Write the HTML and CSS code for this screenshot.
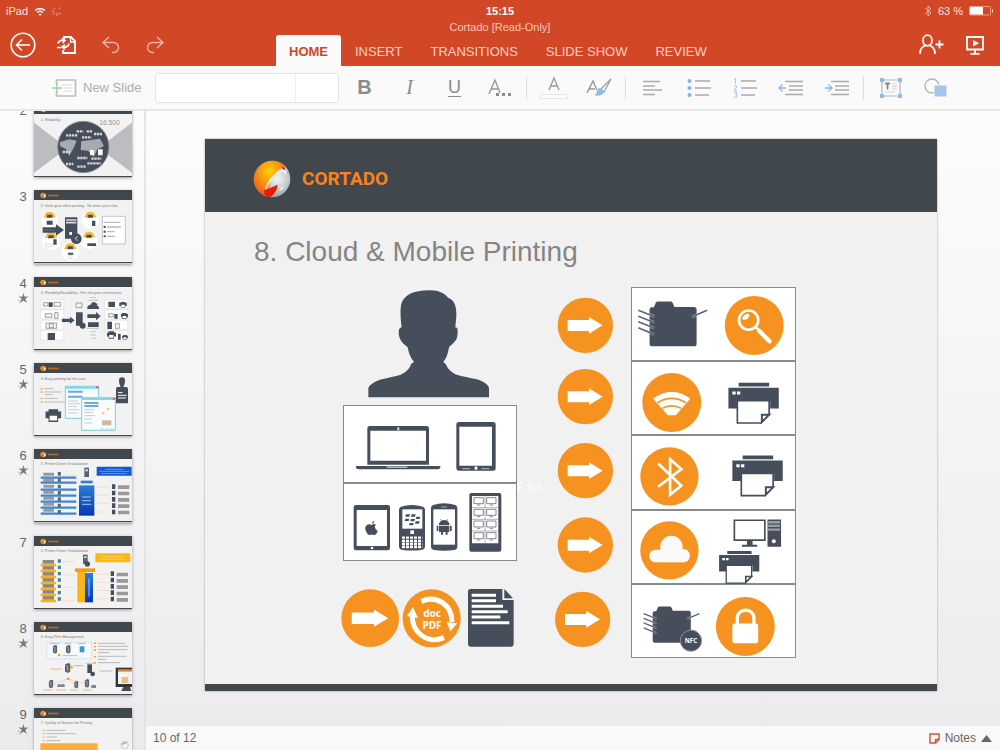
FILE: index.html
```html
<!DOCTYPE html>
<html lang="en">
<head>
<meta charset="utf-8">
<title>Cortado [Read-Only]</title>
<link rel="stylesheet" href="styles.css">
</head>
<body class="app">

<svg class="defs" aria-hidden="true">
  <defs>
    <radialGradient id="ballSilver" cx=".65" cy=".5" r=".6"><stop offset="0" stop-color="#f4f6f6"/><stop offset=".5" stop-color="#c3c9ca"/><stop offset="1" stop-color="#7b8588"/></radialGradient>
    <radialGradient id="ballOrange" cx=".5" cy=".3" r=".7"><stop offset="0" stop-color="#ffd400"/><stop offset=".45" stop-color="#fb9a12"/><stop offset="1" stop-color="#f4511e"/></radialGradient>
    <linearGradient id="blueBox" x2="0" y2="1"><stop offset="0" stop-color="#2a7fd8"/><stop offset="1" stop-color="#0836b4"/></linearGradient>
    <symbol id="arrow" viewBox="-84 -84 168 168" overflow="visible">
      <circle r="83" fill="#f69320"/>
      <path d="M-53-16H11V-25L52 0 11 25V17H-53z" fill="#fff"/>
    </symbol>
    <symbol id="printer" viewBox="0 0 152 124" overflow="visible">
      <path d="M31 0h92v11H31zM0 15h152v62h-26V54H28v23H0z" fill="#474e5b"/>
      <path d="M27 54h96v40l-25 27H27z" fill="#fff" stroke="#474e5b" stroke-width="5"/>
      <path d="M101 118V96h22z" fill="#fff" stroke="#474e5b" stroke-width="6"/>
      <path d="M12 26h10v9H12zM26 26h10v9H26z" fill="#fff"/>
    </symbol>
    <symbol id="folder" viewBox="0 0 210 138" overflow="visible">
      <path d="M34 24q0-7 7-7h6l6-14q2-3 6-3h38q5 0 7 4l5 12h59q8 0 8 8v104q0 7-8 7H42q-8 0-8-8z" fill="#474e5b"/>
      <path d="M0 26l48 19M0 44l48 19M0 61l48 19M0 79l48 20M208 26l-46 20" fill="none" stroke="#fff" stroke-width="9" opacity=".35"/>
      <path d="M0 26l48 19M0 44l48 19M0 61l48 19M0 79l48 20M208 26l-46 20" fill="none" stroke="#606774" stroke-width="5"/>
    </symbol>
    <symbol id="star" viewBox="0 0 12 12"><path d="M6 0l1.2 4.1 4.3-.2L7.900 6.400 9.600 11 6 8.200 2.400 11 4.100 6.400.5 3.900l4.300.2z" fill="#777"/><path d="M1 11l3-2M0 8h3" stroke="#999" stroke-width=".7"/></symbol>
    <symbol id="thumbHead" viewBox="0 0 294 220" overflow="visible">
      <path d="M0 0h294v220H0z" fill="#f2f2f2"/><path d="M0 0h294v30H0zM0 216h294v4H0z" fill="#40484d"/>
      <circle cx="27" cy="16" r="8" fill="#f78a1a"/><path d="M28 17l7-5a8 8 0 0 1-7 12z" fill="#e6e6e6"/><path d="M24 20l6-3-2 6z" fill="#e8271b"/>
      <path d="M42 14h32v5H42z" fill="#b8691f"/>
    </symbol>
    <symbol id="miniPrinter" viewBox="0 0 30 24"><path d="M6 0h18v4h6v13h-6v7H6v-7H0V4h6z" fill="#474e5b"/><path d="M8 12h14v9H8z" fill="#fff"/></symbol>
    <symbol id="miniServer" viewBox="0 0 14 26"><path d="M0 4l8-4 6 2v20l-7 4-7-4z" fill="#59636f"/><path d="M2 6l5 2v13" stroke="#b9c7d4" stroke-width="2" fill="none"/></symbol>
  </defs>
</svg>

<header class="top">
  <div class="status">
    <div class="status-left"><span>iPad</span>
      <svg width="12" height="9" viewBox="0 0 12 9" fill="none" stroke="#fff"><path d="M1 3.500q5-4 10 0M3 5.500q3-2.400 6 0" stroke-width="1.400"/><path d="M4.500 6.800h3L6 9z" fill="#fff" stroke="none"/></svg>
      <svg width="10" height="10" viewBox="0 0 10 10" stroke="#fff" opacity=".6"><path d="M5 7v3M2.900 6.500L1 8.500M2 5H0M3 3L1.500 1.500M7.100 6.500L8.500 8.500M7 3l1.500-1.500" stroke-width=".9"/></svg>
    </div>
    <time class="clock">15:15</time>
    <div class="status-right">
      <svg width="8" height="12" viewBox="0 0 8 12" fill="none" stroke="#f0b5a6"><path d="M1 3l6 5-3 3V1l3 3-6 5"/></svg>
      <span>63 %</span>
      <svg width="25" height="10" viewBox="0 0 25 10"><rect x=".5" y=".5" width="21" height="8.500" rx="1" fill="none" stroke="#ee9d88"/><path d="M1 1h13v7.500H1zM23 3q2 2 0 4z" fill="#fff"/></svg>
    </div>
  </div>

  <div class="tools">
    <button class="tool" aria-label="Back"><svg width="26" height="26" viewBox="0 0 26 26" fill="none" stroke="#fff" stroke-width="1.600"><circle cx="13" cy="13" r="11.800"/><path d="M20 13H7M12 7.500L6.500 13l5.500 5.500"/></svg></button>
    <button class="tool" aria-label="File"><svg width="22" height="20" viewBox="0 0 22 20" fill="none" stroke="#fff" stroke-width="1.800"><path d="M8 4V2h7l4 4v12H7v-3"/><path d="M14.500 2v5H19" stroke-width="1.300"/><path d="M2 8.500Q3 4.500 8 5.500M6 3l3 2.500L6.500 8M13 8.500q-1 4.500-6 3.500M9 9.500L6 12l3 2.500M1 12.500h4" stroke-width="1.600"/></svg></button>
    <button class="tool tool-dim" aria-label="Undo"><svg width="20" height="18" viewBox="0 0 20 18" fill="none" stroke="#fff" stroke-width="1.400"><path d="M8 1L2 6.500 8 12M2 6.500h10.500a5 5 0 0 1 0 10H11"/></svg></button>
    <button class="tool tool-dim" aria-label="Redo"><svg width="20" height="18" viewBox="0 0 20 18" fill="none" stroke="#fff" stroke-width="1.400"><path d="M12 1l6 5.500-6 5.500M18 6.500H7.500a5 5 0 0 0 0 10H9"/></svg></button>
  </div>

  <div class="middle">
    <div class="doc-title">Cortado [Read-Only]</div>
    <nav class="tabs">
      <button class="tab tab-on">HOME</button><button class="tab">INSERT</button><button class="tab">TRANSITIONS</button><button class="tab">SLIDE SHOW</button><button class="tab">REVIEW</button>
    </nav>
  </div>

  <div class="tools tools-right">
    <button class="tool" aria-label="Share"><svg width="26" height="22" viewBox="0 0 26 22" fill="none" stroke="#fff" stroke-width="1.800"><ellipse cx="9.500" cy="6.500" rx="4.500" ry="5.300"/><path d="M2 20q0-7 5.500-8.500M17 20q0-7-5.500-8.500M17.500 10.500h8M21.500 6.500v8"/></svg></button>
    <button class="tool" aria-label="Play slide show"><svg width="20" height="20" viewBox="0 0 20 20" fill="none" stroke="#fff" stroke-width="1.800"><path d="M2 2v12.500h16V2M1 2h18M10 14v4M5.500 18.800h9"/><path d="M8 5l6 3.300L8 11.500z" fill="#fff" stroke="none"/></svg></button>
  </div>
</header>

<div class="ribbon">
  <button class="new-slide"><svg width="25" height="18" viewBox="0 0 25 18" fill="none"><path d="M4.500 6V1h19v16h-19v-5" stroke="#bdbdbd" stroke-width="1.600"/><path d="M10 6h9M12 9h8M12 12h8" stroke="#dedede"/><path d="M0 9h10M5 4v10" stroke="#a3d3a8" stroke-width="1.400"/></svg>New Slide</button>
  <div class="font-box"><input class="font-name" type="text" aria-label="Font"><input class="font-size" type="text" aria-label="Font size"></div>
  <div class="group">
    <button class="rb bold" aria-label="Bold">B</button>
    <button class="rb italic" aria-label="Italic">I</button>
    <button class="rb under" aria-label="Underline">U</button>
    <button class="rb" aria-label="More formatting"><svg width="24" height="20" viewBox="0 0 24 20" fill="none" stroke="#999" stroke-width="1.400"><path d="M1 16L7 2l5 13M3 11h7"/><path d="M8 15h3v3H8zM14 15h3v3h-3zM20 15h3v3h-3z" fill="#8c8c8c" stroke="none"/></svg></button>
  </div>
  <span class="sep"></span>
  <div class="group">
    <button class="rb" aria-label="Font color"><svg width="28" height="24" viewBox="0 0 28 24" fill="none"><path d="M9 14l5-12 5 12M11 10h6" stroke="#999" stroke-width="1.300"/><path d="M.5 18.500h27v4H.5z" fill="#fff" stroke="#e6e6e6"/></svg></button>
    <button class="rb" aria-label="Text effects"><svg width="26" height="20" viewBox="0 0 26 20" fill="none"><path d="M1 15L7 3l4 9M3 11h6" stroke="#999" stroke-width="1.400"/><path d="M14 12L25 1l-7 13z" fill="#fff" stroke="#999" stroke-width="1.200"/><path d="M13 10q5 1 5 5-4 4-10 2 3-1 3-4z" fill="#8fb9e6"/></svg></button>
  </div>
  <span class="sep"></span>
  <div class="group group-wide">
    <button class="rb" aria-label="Align"><svg width="19" height="16" viewBox="0 0 19 16" stroke="#aaa" stroke-width="1.400"><path d="M0 1.500h17M0 6h12M0 10h19M0 14.500h12"/></svg></button>
    <button class="rb" aria-label="Bullets"><svg width="24" height="20" viewBox="0 0 24 20" stroke="#aaa" stroke-width="1.400"><path d="M8 3h15M8 10h16M8 17h14"/><g fill="#86b3e4" stroke="none"><circle cx="2.500" cy="3" r="2"/><circle cx="2.500" cy="10" r="2"/><circle cx="2.500" cy="17" r="2"/></g></svg></button>
    <button class="rb" aria-label="Numbering"><svg width="24" height="20" viewBox="0 0 24 20" stroke="#aaa" stroke-width="1.400"><path d="M8 3h15M8 10h16M8 17h14"/><path d="M1 1.500L2.500.5V6M1 8h2.500v1.500L1 12h3M1 14h3l-1.500 2H4l-.5 3H1" fill="none" stroke="#a4c6ec" stroke-width="1"/></svg></button>
    <button class="rb" aria-label="Decrease indent"><svg width="26" height="16" viewBox="0 0 26 16" fill="none" stroke="#aaa" stroke-width="1.600"><path d="M7 1.500h18M11 6h14M11 10h14M7 14.500h18"/><path d="M8 8H1M4.500 4.500L1 8l3.500 3.500" stroke="#8fb9e6" stroke-width="1.300"/></svg></button>
    <button class="rb" aria-label="Increase indent"><svg width="26" height="16" viewBox="0 0 26 16" fill="none" stroke="#aaa" stroke-width="1.600"><path d="M7 1.500h18M11 6h14M11 10h14M7 14.500h18"/><path d="M1 8h7M4.500 4.500L8 8l-3.500 3.500" stroke="#8fb9e6" stroke-width="1.300"/></svg></button>
  </div>
  <span class="sep"></span>
  <div class="group">
    <button class="rb" aria-label="Text box"><svg width="22" height="20" viewBox="0 0 22 20" fill="none"><path d="M2 2h18v16H2z" stroke="#b5b5b5" stroke-width="1.200"/><path d="M5 5.500h5M7.500 5.500v6" stroke="#888" stroke-width="1.800"/><path d="M12 6h5M12 8.500h5M12 11h5M5 14h10" stroke="#cfcfcf"/><path d="M0 0h4v4H0zM18 0h4v4h-4zM0 16h4v4H0zM18 16h4v4h-4z" fill="#8fb9e6"/></svg></button>
    <button class="rb" aria-label="Shapes"><svg width="24" height="20" viewBox="0 0 24 20" fill="none"><circle cx="8" cy="8" r="7" stroke="#b5b5b5" stroke-width="1.400"/><path d="M10 7h13v12H10z" fill="#a5c5e8" stroke="#fafafa"/></svg></button>
  </div>
</div>

<div class="work">
  <aside class="side" aria-label="Slides">
    <ol class="thumbs">
      <li class="thumb-row"><div class="num">2</div>
        <svg class="thumb" viewBox="104 10 294 220"><use href="#thumbHead" x="104" y="10" width="294" height="220"/>
          <text x="124" y="60" class="t-title">1. Reliability</text><text x="300" y="74" class="t-big">16.500</text>
          <path d="M104 66l100 76-100 74zM398 66l-100 76 100 74z" fill="#bcbdc1"/><circle cx="252" cy="139" r="77" fill="#474e5b" stroke="#8d9199" stroke-width="3"/>
          <path d="M182 124l28-8 22 4-8 20-14 26-10-20-18-10zM246 122l56-8 12 22-20 10-10 22-18-18-22-2z" fill="#a7abb1"/>
          <path d="M232 92h20M262 92h18M200 104h34M284 100h24M248 110h28M190 154h22M234 172h30M200 190h22M264 188h40M234 198h26M276 174h30" stroke="#d5d7da" stroke-width="7" stroke-dasharray="7 2"/>
          <path d="M272 148h12v16h-12zM296 146h14v18h-14z" fill="#fff"/></svg></li>

      <li class="thumb-row"><div class="num">3</div>
        <svg class="thumb" viewBox="104 270 294 220"><use href="#thumbHead" x="104" y="270" width="294" height="220"/>
          <text x="124" y="320" class="t-title">2. Unite your office printing - No more print silos</text>
          <g fill="#fff"><circle cx="151" cy="359" r="26"/><circle cx="272" cy="360" r="26"/><circle cx="155" cy="424" r="26"/><circle cx="269" cy="422" r="26"/><circle cx="213" cy="456" r="26"/></g>
          <path d="M132 352l8-14q11-6 22 0l8 14zM254 352l8-14q11-6 22 0l8 14zM136 414l8-14q11-6 22 0l8 14zM250 412l8-14q11-6 22 0l8 14zM194 447l8-14q11-6 22 0l8 14z" fill="#f5b934"/>
          <g fill="#474e5b"><path d="M142 353l2-9h14l2 9zM264 353l2-9h14l2 9zM146 415l2-9h14l2 9zM260 413l2-9h14l2 9zM204 448l2-9h14l2 9z"/><path d="M130 382h40v-9l24 17-24 17v-9h-40zM197 352h37v64h-37z"/><circle cx="231" cy="416" r="16"/><path d="M142 362h18v12h-18zM278 362h10v16h-10zM162 418h10v16h-10zM264 430h26v8h-26zM206 458h16v6h-16z"/></g>
          <path d="M200 360h31M200 368h31" stroke="#d8dadd" stroke-width="5"/><path d="M210 396h8v9h-8zM226 416l8-8v5h-4v8h8" fill="#fff"/>
          <path d="M136 390h30" stroke="#687" stroke-width="3" stroke-dasharray="4 2"/><path d="M138 432h20v8h-20zM208 466h10v10h-10z" stroke="#999" fill="none"/>
          <path d="M309 349h69v83h-69z" fill="#fff" stroke="#aaa" stroke-width="2"/><path d="M313 367h50M324 381h40M324 395h22M324 409h22" stroke="#aaa" stroke-width="4" stroke-dasharray="5 1"/><path d="M313 378h6v6h-6zM313 392h6v6h-6zM313 406h6v6h-6z" fill="#474e5b"/></svg></li>

      <li class="thumb-row"><div class="num">4<svg class="star"><use href="#star"/></svg></div>
        <svg class="thumb" viewBox="104 20 294 220"><use href="#thumbHead" x="104" y="20" width="294" height="220"/>
          <text x="124" y="70" class="t-title">3. Flexibility/Scalability - Fits into your architecture</text>
          <path d="M124 88h69v27h-69zM124 119h69v27h-69zM124 150h69v27h-69zM124 181h69v28h-69zM316 88h69v27h-69zM316 119h69v27h-69zM316 150h69v27h-69zM316 181h69v28h-69z" fill="#fff" stroke="#ccc"/>
          <g fill="#474e5b"><path d="M188 145h24v-6l14 11-14 11v-6h-24zM264 132h26v-7l14 13-14 12v-7h-26zM230 126h20v40h-20zM264 116q-2-12 10-13 4-12 15-6 8 4 4 9 8 2 6 10zM266 156h32v14h-32zM327 94h20v16h-20zM324 154h14v22h-14zM145 188h22v21h-22zM356 190h8v18h-8zM345 131h10v14h-10zM148 96h12v14h-12z"/><circle cx="250" cy="166" r="9"/></g>
          <use href="#miniPrinter" x="358" y="94" width="26" height="18"/><use href="#miniPrinter" x="364" y="128" width="22" height="18"/><use href="#miniPrinter" x="322" y="182" width="28" height="24"/><use href="#miniPrinter" x="368" y="194" width="18" height="14"/>
          <path d="M132 97h14v10h-14zM164 96h20v12h-20zM138 130h20v11h-20zM166 127h10v17h-10zM140 158h32v16h-32zM150 160h12v12h-12zM230 98h18v14h-18zM328 130h14v10h-14zM348 160h12v14h-12z" fill="#f4f4f4" stroke="#777" stroke-width="2"/>
          <path d="M272 82h18M268 90h28M262 174h36M274 184h14M272 194h18M276 204h14" stroke="#c4c4c4" stroke-width="3"/></svg></li>

      <li class="thumb-row"><div class="num">5<svg class="star"><use href="#star"/></svg></div>
        <svg class="thumb" viewBox="104 280 294 220"><use href="#thumbHead" x="104" y="280" width="294" height="220"/>
          <text x="124" y="330" class="t-title">4. Easy printing for the user</text>
          <path d="M124 355h6v5h-6zM124 365h6v5h-6zM124 384h6v5h-6zM124 395h6v5h-6z" fill="#f5b255"/><path d="M135 357h28M135 367h52M135 375h26M135 386h40M135 397h62" stroke="#bbb" stroke-width="3"/>
          <use href="#miniPrinter" x="138" y="418" width="48" height="40"/>
          <path d="M198 350h100v96H198z" fill="#f7fbfc" stroke="#79d0e3" stroke-width="3"/><path d="M198 350h100v7H198z" fill="#86d7e8"/><path d="M206 366h44M206 381h44" stroke="#6aa7e8" stroke-width="6"/><path d="M206 394h30M206 402h36M206 410h26M206 420h34M206 430h28" stroke="#c3cdd3" stroke-width="3"/>
          <path d="M247 384h101v98H247z" fill="#f9fcfd" stroke="#79d0e3" stroke-width="3"/><path d="M247 384h101v7H247z" fill="#86d7e8"/><path d="M255 400h42M255 409h42" stroke="#6aa7e8" stroke-width="6"/><path d="M255 420h30M255 428h26M255 438h32M255 448h22M255 460h24M302 478h12M318 478h10M332 478h10" stroke="#c3cdd3" stroke-width="3"/>
          <path d="M290 350h8v6h-8zM340 384h8v6h-8z" fill="#d86b5c"/><path d="M308 428h7v6h-7zM322 414h7v6h-7z" fill="#f8c46b"/><path d="M308 452h28v15h-28z" fill="#c8bda2"/>
          <path d="M359 333q0-10 9-10t9 10-4 15v4h8q5 0 5 6v43h-36v-43q0-6 5-6h8v-4q-4-5-4-15z" fill="#474e5b"/><path d="M356 369h14M356 377h26M356 385h24" stroke="#fff" stroke-width="3"/></svg></li>

      <li class="thumb-row"><div class="num">6<svg class="star"><use href="#star"/></svg></div>
        <svg class="thumb" viewBox="104 31 294 220"><use href="#thumbHead" x="104" y="31" width="294" height="220"/>
          <text x="124" y="80" class="t-title">5. Printer Driver Virtualization</text>
          <path d="M148 102V228" stroke="#999" stroke-width="32" stroke-dasharray="9 9"/><path d="M124 117h107M124 132h107M124 153h107M124 171h107M124 189h107M124 207h107M124 225h107" stroke="#4284cf" stroke-width="7"/>
          <path d="M180 100v126" stroke="#4d6b70" stroke-width="9" stroke-dasharray="11 8"/>
          <path d="M292 84h105v27H292z" fill="#1259cc"/><path d="M318 92h54M300 98h90M306 105h76" stroke="#88b3ee" stroke-width="2"/>
          <path d="M239 140h46v91h-46z" fill="url(#blueBox)"/><path d="M244 126h36v8h-36z" fill="#2a7fd8"/><path d="M248 175h26M248 186h26M248 197h28" stroke="#a4c5ef" stroke-width="3"/>
          <path d="M255 87h14v28h-14z" fill="#59636f"/><path d="M258 92h8v6h-8z" fill="#ddd"/>
          <path d="M292 146h37M292 170h37M292 194h37M292 220h37M190 110h40" stroke="#fbd6a4" stroke-width="2"/>
          <path d="M343 137v93" stroke="#474e5b" stroke-width="10" stroke-dasharray="14 5"/><path d="M373 140v90" stroke="#999" stroke-width="34" stroke-dasharray="11 8"/></svg></li>

      <li class="thumb-row"><div class="num">7</div>
        <svg class="thumb" viewBox="104 291 294 220"><use href="#thumbHead" x="104" y="291" width="294" height="220"/>
          <text x="124" y="340" class="t-title">5. Printer Driver Virtualization</text>
          <path d="M147 363v126" stroke="#888" stroke-width="34" stroke-dasharray="11 7"/><path d="M124 378h46M124 396h46M124 414h46M124 432h46M124 450h46M124 468h46M124 486h46" stroke="#fbb01e" stroke-width="8"/>
          <path d="M180 361v126" stroke="#4d7b88" stroke-width="9" stroke-dasharray="10 9"/><path d="M288 343h105v27H288z" fill="#fdb713"/><path d="M306 353h66M300 361h80" stroke="#ffe3a0" stroke-width="2"/>
          <path d="M234 396h24v94h-24z" fill="#fbb414"/><path d="M257 402h24v88h-24z" fill="url(#blueBox)"/><path d="M227 388h60v11h-60z" fill="#f79b17"/><path d="M269 418v55M246 440v24" stroke="#9ec5e9" stroke-width="3"/>
          <path d="M251 347h14v28h-14z" fill="#59636f"/><circle cx="264" cy="375" r="8" fill="#474e5b"/><path d="M254 352h8v5h-8z" fill="#ddd"/>
          <path d="M292 406h37M292 430h37M292 454h37M292 479h37M190 368h38M190 408h38M190 445h38M190 485h38" stroke="#fbd6a4" stroke-width="2"/>
          <path d="M339 397v93" stroke="#474e5b" stroke-width="10" stroke-dasharray="14 5"/><path d="M369 401v88" stroke="#999" stroke-width="34" stroke-dasharray="11 8"/></svg></li>

      <li class="thumb-row"><div class="num">8<svg class="star"><use href="#star"/></svg></div>
        <svg class="thumb" viewBox="104 41 294 220"><use href="#thumbHead" x="104" y="41" width="294" height="220"/>
          <text x="124" y="90" class="t-title">6. Easy Print Management</text>
          <path d="M142 102h135v49H142z" fill="#f6f9fb" stroke="#c1dced" stroke-width="2"/><path d="M204 210l-54 22M204 210l-20 22M204 210l26 22M204 210l58 18" stroke="#f9c98d" fill="none" stroke-width="2"/>
          <use href="#miniServer" x="160" y="110" width="14" height="26"/><use href="#miniServer" x="200" y="110" width="14" height="26"/><path d="M241 114h14v18h-14z" fill="#319fce"/><use href="#miniServer" x="196" y="164" width="18" height="30"/><use href="#miniServer" x="148" y="214" width="14" height="26"/><use href="#miniServer" x="224" y="218" width="14" height="22"/><use href="#miniServer" x="256" y="212" width="14" height="26"/><path d="M264 168h14v26h-14z" fill="#474e5b"/><circle cx="280" cy="197" r="7" fill="#474e5b"/><path d="M174 228h22v8h-22zM276 230h14v9h-14z" fill="#7c8795"/>
          <path d="M176 137h7v7h-7zM203 208h7v7h-7zM213 173h7v7h-7zM284 103h6v4h-6zM284 113h6v4h-6zM284 123h6v4h-6zM284 143h6v4h-6zM284 161h6v4h-6z" fill="#f79b17"/>
          <path d="M296 105h82M296 114h92M296 124h88M296 133h34M296 144h86M296 153h24M296 163h66M300 188h40M190 142h44M152 106h28M196 106h20M234 106h26M224 172h28" stroke="#bbb" stroke-width="3"/><path d="M130 245h30M170 245h30M212 245h24M250 245h26M152 182h36M260 165h28" stroke="#f3b876" stroke-width="3"/>
          <path d="M349 178h49v58h-49z" fill="#2f353c"/><path d="M356 184h42v43h-42z" fill="#f3f3f3"/><path d="M356 184h42v6h-42z" fill="#f58220"/><path d="M367 206h20v18h-20z" fill="#eebd82"/><path d="M372 236h20l4 12h-30z" fill="#42494f"/></svg></li>

      <li class="thumb-row"><div class="num">9<svg class="star"><use href="#star"/></svg></div>
        <svg class="thumb" viewBox="104 301 294 220"><use href="#thumbHead" x="104" y="301" width="294" height="220"/>
          <text x="124" y="350" class="t-title">7. Quality of Service for Printing</text>
          <path d="M130 366h6v4h-6zM130 376h6v4h-6zM130 387h6v4h-6zM130 397h6v4h-6z" fill="#f5b255"/><path d="M141 368h58M141 378h88M141 388h32M141 399h42" stroke="#bbb" stroke-width="3"/>
          <path d="M123 407h172v40H123z" fill="#f9ae3e"/><circle cx="376" cy="412" r="11" fill="none" stroke="#c8c8c8" stroke-width="3"/><path d="M368 410l14-6" stroke="#888" stroke-width="3"/></svg></li>
    </ol>
  </aside>

  <main class="main">
    <div class="canvas">
      <article class="slide">
        <div class="slide-head">
          <svg width="38" height="38" viewBox="0 0 114 114"><circle cx="57" cy="57" r="55" fill="url(#ballSilver)"/><path d="M43 110A55 55 0 0 1 4 44Q22 2 60 2q24 1 36 18-40 8-54 90z" fill="url(#ballOrange)"/><path d="M38 82q10-32 46-52 12-8 18-2l-6 12q-8-8-16 0Q48 64 38 92z" fill="#eceeee"/><path d="M32 92l42-18q-2 24-24 38-16-2-18-20z" fill="#e8190f"/><path d="M78 92l14-15q0 12-14 15M90 34l8 10q2-6-2-12z" fill="#fff"/><path d="M86 22q8-4 12 8-8 2-12-8z" fill="#e8190f"/></svg>
          <span class="brand">CORTADO</span>
        </div>
        <h1 class="slide-title">8. Cloud &amp; Mobile Printing</h1>
        <div class="diagram">
          <div class="col-left">
            <svg class="art" viewBox="39 21 522 354" role="img" aria-label="User">
              <path d="M297 31C325 30 345 40 354 53C374 60 380 80 379 108L376 142C384 142 384 152 382 168C380 182 370 190 358 200C354 212 354 228 340 246L347 252C355 270 366 278 380 284C396 290 420 292 440 298C460 304 477 315 477 325V352H115V325C117 315 135 304 155 298C175 292 195 290 212 284C226 278 238 268 243 252L252 246C240 232 236 218 233 202C220 192 210 182 207 168C205 152 206 144 215 142C212 120 210 95 213 75C220 45 250 31 297 31z" fill="#474e5b"/></svg>
            <div class="panel"><svg class="art" viewBox="42 378 516 228" role="img" aria-label="Laptop and tablet">
              <path d="M119 438h171q7 0 7 8v108H112V446q0-8 7-8zM78 558h253v5q-3 5-9 5H87q-6 0-9-5z" fill="#474e5b"/><path d="M121 452h167v90H121z" fill="#fff"/><path d="M170 559h62v5h-62z" fill="#aeb2b8"/><path d="M202 442h6v9h-6z" fill="#d8dade"/>
              <rect x="379" y="426" width="118" height="146" rx="8" fill="#474e5b"/><path d="M388 440h98v117h-98z" fill="#fff"/><path d="M397 566h24M454 566h24" stroke="#9fa3aa" stroke-width="4"/><path d="M434 560h8v9h-8z" fill="#fff"/></svg></div>
            <div class="panel"><svg class="art" viewBox="42 12 516 228" role="img" aria-label="Mobile devices">
              <rect x="71" y="75" width="109" height="136" rx="7" fill="#474e5b"/><path d="M80 90h91v108H80z" fill="#fff"/><circle cx="126" cy="204" r="4" fill="#fff"/>
              <path d="M125 135q6-6 13-1-9 7 5 19-5 14-11 12-7-3-12 0c-7 3-16-15-14-23 3-9 12-12 19-7zM125 132q1-8 8-10 0 8-8 10" fill="#474e5b"/>
              <path d="M213 80q32-10 66 0 6 2 6 10v108q0 9-8 11-31 5-62 0-8-2-8-11V90q0-8 6-10z" fill="#474e5b"/><path d="M217 88h60v58h-60z" fill="#fff"/><path d="M241 151h11v11h-11z" fill="#fff"/>
              <path d="M228 103h12l-2 7h-12zM245 103h12l-2 7h-12zM226 116h12l-2 7h-12zM243 117h12l-2 7h-12zM259 110h12l-2 7h-12zM239 129h12l-2 7h-12zM257 124h12l-2 7h-12z" fill="#474e5b"/>
              <path d="M216 173h61M216 183h61M216 192h61M216 201h61" stroke="#fff" stroke-width="7" stroke-dasharray="9 3"/>
              <path d="M309 75q33-10 67 0 6 3 6 10v115q0 7-6 9-33 6-67 0-6-2-6-9V85q0-7 6-10z" fill="#474e5b"/><path d="M310 88h65v106h-65z" fill="#fff"/><path d="M333 81h18" stroke="#aaa" stroke-width="3"/>
              <path d="M326 135q2-14 17-15 14 1 16 15zM327 137h31v19h-5v8h-6v-8h-8v8h-6v-8h-6zM320 137h5v16h-5zM360 137h5v16h-5z" fill="#474e5b"/><path d="M332 117l4 7M354 117l-4 7" stroke="#474e5b" stroke-width="2"/>
              <rect x="418" y="39" width="96" height="176" rx="6" fill="#474e5b"/><path d="M426 48h79v142h-79z" fill="#fff"/><path d="M426 83h79M426 118h79M426 153h79M465 48v142" stroke="#8a9098" stroke-width="2"/>
              <g fill="#fff" stroke="#474e5b" stroke-width="2"><path id="mon" d="M432 53h28v18h-28zM441 75h10M470 53h28v18h-28zM479 75h10"/><use href="#mon" y="35"/><use href="#mon" y="70"/><use href="#mon" y="105"/></g></svg></div>
            <svg class="art" viewBox="39 243 522 288" role="img" aria-label="Document conversion">
              <use href="#arrow" x="33" y="327" width="175" height="175"/>
              <circle cx="305" cy="415" r="87" fill="#f69320"/><path d="M274 364c46-20 92 10 92 62M342 473c-50 20-97-16-95-66" fill="none" stroke="#fff" stroke-width="15"/><path d="M350 426l32 4-21 24zM231 408l18-26 15 32z" fill="#fff"/>
              <text x="306" y="410" class="doc-text">doc</text><text x="306" y="446" class="doc-text">PDF</text>
              <path d="M421 327h96v33h34v133q0 7-7 7H421q-7 0-7-7V334q0-7 7-7z" fill="#474e5b"/><path d="M524 329l23 25h-23z" fill="#474e5b" stroke="#474e5b" stroke-width="2"/>
              <path d="M425 346h73M425 362h73M425 379h94M425 395h108M425 411h86M425 428h113" stroke="#fff" stroke-width="9"/></svg>
            <span class="ghost">E Sol.</span>
          </div>
          <svg class="art col-arrows" viewBox="42 21 180 1110" role="img" aria-label="Arrows">
            <use href="#arrow" x="52" y="52" width="168" height="168"/><use href="#arrow" x="52" y="266" width="168" height="168"/><use href="#arrow" x="52" y="488" width="168" height="168"/><use href="#arrow" x="52" y="711" width="168" height="168"/><use href="#arrow" x="44" y="934" width="168" height="168"/></svg>
          <div class="col-cards">
            <div class="card"><svg class="art" viewBox="276 24 492 218" role="img" aria-label="Folder search"><use href="#folder" x="295" y="65" width="210" height="138"/><circle cx="645" cy="137" r="89" fill="#f69320"/><circle cx="628" cy="121" r="29" fill="none" stroke="#fff" stroke-width="8"/><path d="M650 143l12 12" stroke="#fff" stroke-width="7"/><path d="M660 153l31 32" stroke="#fff" stroke-width="13" stroke-linecap="round"/><path d="M609 120q0-16 17-18 4 0 4 7-3 9-15 11z" fill="#fff"/></svg></div>
            <div class="card"><svg class="art" viewBox="276 246 492 218" role="img" aria-label="Wi-Fi printing"><circle cx="396" cy="368" r="89" fill="#f69320"/><path d="M340 357q56-42 112 0l-44 50h-24z" fill="#fff"/><path d="M353 369q43-26 86 0M367 386q29-15 58 0" fill="none" stroke="#f69320" stroke-width="5"/><use href="#printer" x="567" y="309" width="152" height="124"/></svg></div>
            <div class="card"><svg class="art" viewBox="276 -132 492 218" role="img" aria-label="Bluetooth printing"><circle cx="389" cy="-10" r="88" fill="#f69320"/><path d="M355-49l70 67-34 27V-62l34 30-70 53" fill="none" stroke="#fff" stroke-width="8"/><use href="#printer" x="579" y="-73" width="152" height="124"/></svg></div>
            <div class="card"><svg class="art" viewBox="276 90 492 218" role="img" aria-label="Cloud printing"><circle cx="389" cy="209" r="88" fill="#f69320"/><g fill="#fafafa"><circle cx="347" cy="226" r="19"/><circle cx="395" cy="199" r="34"/><circle cx="431" cy="225" r="20"/><path d="M347 207h84v38h-84z"/></g><path d="M585 118h92v60h-92z" fill="#fff" stroke="#474e5b" stroke-width="5"/><path d="M623 180h17v12h14v6h-46v-6h15zM685 116h41v82h-41z" fill="#474e5b"/><path d="M687 124h36M687 135h36M687 146h36" stroke="#9a9fa7" stroke-width="7"/><circle cx="704" cy="181" r="6" fill="#fff"/><use href="#printer" x="538" y="211" width="123" height="99"/></svg></div>
            <div class="card"><svg class="art" viewBox="276 312 492 218" role="img" aria-label="Secure NFC printing"><use href="#folder" x="311" y="377" width="170" height="112"/><circle cx="454" cy="480" r="32" fill="#474e5b" stroke="#8a9098" stroke-width="3"/><text x="454" y="487" class="nfc">NFC</text><circle cx="618" cy="437" r="89" fill="#f69320"/><path d="M594 430v-18c0-32 50-32 50 0v18" fill="none" stroke="#fff" stroke-width="10"/><rect x="579" y="428" width="78" height="60" rx="7" fill="#fff"/></svg></div>
          </div>
        </div>
        <div class="slide-foot"></div>
      </article>
    </div>
    <footer class="bottom">
      <span>10 of 12</span>
      <button class="notes"><svg width="11" height="11" viewBox="0 0 11 11" fill="none" stroke="#d9512f" stroke-width="1.400"><path d="M1 1h9v5.500L6.500 10H1z"/><path d="M10 6.500H6.500V10"/></svg>Notes<svg width="11" height="7" viewBox="0 0 11 7"><path d="M0 7l5.500-7L11 7z" fill="#666"/></svg></button>
    </footer>
  </main>
</div>
</body>
</html>
```
FILE: styles.css
```css
* { box-sizing: border-box; }
.app {
  margin: 0;
  height: 100vh;
  display: flex;
  flex-direction: column;
  overflow: hidden;
  font-family: "Liberation Sans", Arial, sans-serif;
  color: #666;
}
.defs { position: absolute; width: 0; height: 0; }
button, input { font: inherit; color: inherit; border: 0; background: none; padding: 0; margin: 0; }
svg { display: block; flex: none; }

/* Title bar */
.top {
  flex: none;
  display: grid;
  grid-template-columns: 276px 1fr 276px;
  grid-template-rows: 20px 46px;
  background: #d24726;
  color: #fff;
}
.status {
  grid-column: 1 / -1;
  display: grid;
  grid-template-columns: 1fr auto 1fr;
  align-items: center;
  padding: 2px 6px 0;
  font-size: 11px;
}
.status-left, .status-right { display: flex; align-items: center; gap: 6px; color: #fbe3dc; }
.status-right { justify-content: flex-end; }
.clock { font-weight: bold; }
.tools { display: flex; align-items: center; height: 46px; padding: 4px 0 0 3px; gap: 4px; }
.tools-right { justify-content: flex-end; padding-right: 5px; }
.tool { width: 40px; height: 40px; display: flex; align-items: center; justify-content: center; }
.tool-dim { opacity: .6; }
.middle { display: flex; flex-direction: column; }
.doc-title { height: 15px; line-height: 14px; font-size: 11px; text-align: center; color: #f6c8bc; }
.tabs { display: flex; height: 31px; }
.tab { padding: 2px 14px 0; font-size: 13px; color: #f9cfc4; white-space: nowrap; }
.tab-on { background: #fafafa; color: #d24726; font-weight: bold; padding: 2px 13px 0; border-radius: 3px 3px 0 0; }

/* Ribbon */
.ribbon {
  flex: none;
  height: 45px;
  display: flex;
  align-items: center;
  padding-left: 52px;
  background: #fafafa;
  border-bottom: 2px solid #e6e6e6;
  color: #8c8c8c;
}
.new-slide { display: flex; align-items: center; gap: 6px; width: 103px; font-size: 13px; color: #adadad; white-space: nowrap; }
.font-box { display: flex; width: 184px; height: 30px; border: 1px solid #e4e4e4; border-radius: 3px; background: #fff; margin-right: 3px; }
.font-name { flex: 1; min-width: 0; }
.font-size { width: 43px; border-left: 1px solid #eee; }
.group { display: flex; }
.group-wide { gap: 1px; }
.rb { width: 45px; height: 40px; display: flex; align-items: center; justify-content: center; font-size: 20px; }
.bold { font-weight: bold; }
.italic { font-family: "Liberation Serif", serif; font-style: italic; }
.under { font-size: 18px; text-decoration: underline; text-underline-offset: 3px; text-decoration-thickness: 1px; }
.sep { width: 1px; height: 24px; margin: 0 4px; background: #dedede; }

/* Slide list */
.work { flex: 1; min-height: 0; display: flex; background: linear-gradient(#fcfcfc, #ebebed); }
.side { width: 146px; flex: none; overflow: hidden; border-right: 2px solid #e3e4e6; }
.thumbs { list-style: none; margin: -7px 0 0; padding: 0 14px 0 16px; display: flex; flex-direction: column; gap: 13px; }
.thumb-row { display: flex; gap: 4px; }
.num { width: 14px; flex: none; font-size: 13px; line-height: 14px; color: #666; text-align: center; display: flex; flex-direction: column; align-items: center; }
.star { width: 11px; height: 11px; margin-top: 2px; }
.thumb { width: 98px; height: auto; box-shadow: 0 1px 3px #999; }
.t-title { font-size: 11px; fill: #777; }
.t-big { font-size: 20px; fill: #999; }

/* Slide */
.main { flex: 1; min-width: 0; display: flex; flex-direction: column; }
.canvas { flex: 1; min-height: 0; padding: 28px 63px 0 59px; }
.slide { background: #f1f1f1; box-shadow: 0 0 2px #999; }
.slide-head { height: 73px; display: flex; align-items: center; gap: 11px; padding: 6px 0 0 48px; background: #40484d; }
.brand { font-family: Roboto, sans-serif; font-weight: bold; font-size: 19px; color: #f8821c; }
.slide-title { margin: 0; height: 75px; padding: 24px 49px 0; font-size: 28px; line-height: 32px; font-weight: normal; color: #858585; white-space: nowrap; }
.diagram {
  display: grid;
  grid-template-columns: 138fr 174fr 37fr 60fr 17fr 165fr 141fr;
  align-items: start;
}
.col-left { grid-column: 2; position: relative; }
.col-arrows { grid-column: 4; }
.col-cards { grid-column: 6; }
.art { width: 100%; height: auto; overflow: visible; }
.panel, .card { background: #fff; border: 1px solid #858b8f; }
.doc-text { font-family: "Open Sans", sans-serif; font-weight: bold; font-size: 30px; fill: #fff; text-anchor: middle; }
.nfc { font-family: "Open Sans", sans-serif; font-weight: bold; font-size: 19px; fill: #fff; text-anchor: middle; }
.ghost { position: absolute; left: 100%; top: 195px; font-size: 10px; color: #fff; white-space: nowrap; }
.slide-foot { height: 7px; margin-top: 26px; background: #40484d; }

/* Status bar */
.bottom { flex: none; height: 24px; display: flex; align-items: center; justify-content: space-between; padding: 0 8px 0 7px; background: #f9f9f9; font-size: 12px; }
.notes { display: flex; align-items: center; gap: 5px; }
```
